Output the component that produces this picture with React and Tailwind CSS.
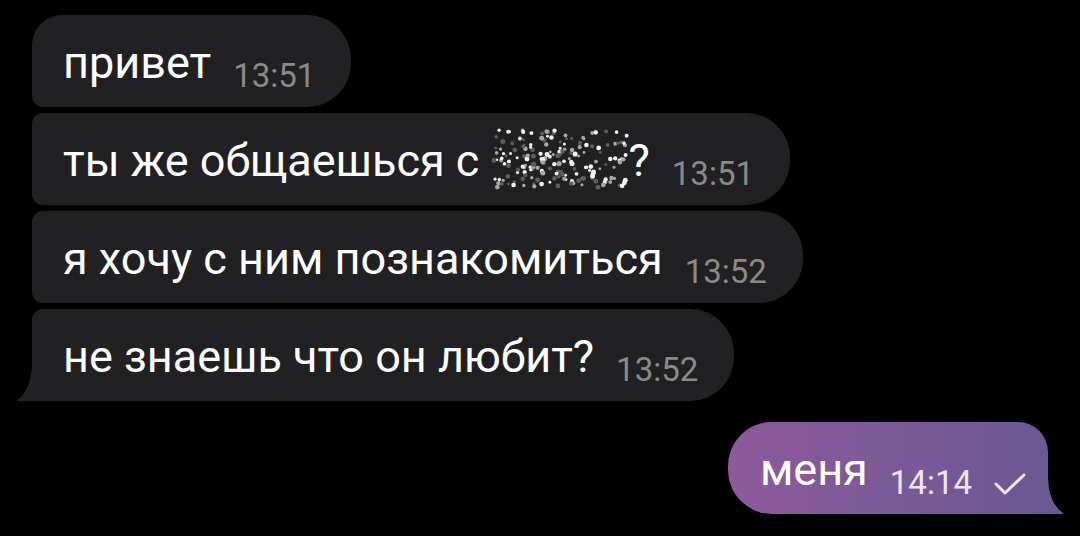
import React from 'react';

// seeded noise for the censored name
const makeDots = () => {
  let s = 987654;
  const rnd = () => {
    s = (s * 1103515245 + 12345) % 2147483648;
    return s / 2147483648;
  };
  const dots = [];
  for (let i = 0; i < 190; i++) {
    const shade = rnd();
    dots.push({
      x: 2 + rnd() * 136,
      y: 2 + rnd() * 59,
      r: 1.4 + rnd() * 1.2,
      c: shade > 0.6 ? '#f2f2f2' : shade > 0.3 ? '#a8a8a8' : '#5e5e5e',
    });
  }
  return dots;
};

const dots = makeDots();

const Censored = () => (
  <svg width="138" height="63" viewBox="0 0 140 63" className="inline-block align-[-10px] -mt-[10px] -mb-[4px]">
    {dots.map((d, i) => (
      <circle key={i} cx={d.x} cy={d.y} r={d.r} fill={d.c} />
    ))}
  </svg>
);

const InTail = () => (
  <svg width="20" height="40" viewBox="0 0 20 40" className="absolute left-[-16px] bottom-0">
    <path d="M20 0 L20 40 L2 40 Q0 40 1.5 38.6 C10 32 16 22 16 0 Z" fill="#212123" />
  </svg>
);

const OutTail = () => (
  <svg width="20" height="40" viewBox="0 0 20 40" className="absolute right-[-16px] bottom-0">
    <path d="M0 0 L0 40 L18 40 Q20 40 18.5 38.6 C10 32 4 22 4 0 Z" fill="#6a5893" />
  </svg>
);

const Bubble = ({ text, time, rounded, tail }) => (
  <div className={`relative flex items-end h-[92px] bg-[#212123] pl-[31px] pr-[36px] pt-[22px] pb-[18px] ${rounded}`}>
    <span className="text-[45px] leading-[52px] text-white whitespace-nowrap">{text}</span>
    <span className="ml-[22px] text-[33px] leading-[27px] text-[#8a8a8a]">{time}</span>
    {tail && <InTail />}
  </div>
);

export default function App() {
  return (
    <div className="w-[1080px] h-[536px] bg-black overflow-hidden font-[Roboto,sans-serif] pt-[15px]">
      <div className="flex flex-col items-start gap-[6px] pl-[32px]">
        <Bubble text="привет" time="13:51" rounded="rounded-tl-[30px] rounded-bl-[11px] rounded-r-[44px]" />
        <Bubble
          text={<>ты же общаешься с <Censored />?</>}
          time="13:51"
          rounded="rounded-l-[11px] rounded-r-[44px]"
        />
        <Bubble text="я хочу с ним познакомиться" time="13:52" rounded="rounded-l-[11px] rounded-r-[44px]" />
        <Bubble text="не знаешь что он любит?" time="13:52" rounded="rounded-tl-[11px] rounded-r-[44px]" tail />
      </div>

      <div className="flex justify-end pr-[32px] mt-[21px]">
        <div className="relative flex items-end h-[92px] bg-gradient-to-r from-[#8d5a9b] to-[#6a5893] pl-[32px] pr-[22px] pt-[22px] pb-[18px] rounded-l-[44px] rounded-tr-[30px]">
          <span className="text-[45px] leading-[52px] text-white">меня</span>
          <span className="ml-[22px] text-[33px] leading-[27px] text-[#efe6f4]">14:14</span>
          <svg width="32" height="22" viewBox="0 0 32 22" className="ml-[22px] mb-[1px]">
            <path d="M2 11 L11 20 L30 2" fill="none" stroke="#efe6f4" strokeWidth="3" strokeLinecap="round" strokeLinejoin="round" />
          </svg>
          <OutTail />
        </div>
      </div>
    </div>
  );
}
